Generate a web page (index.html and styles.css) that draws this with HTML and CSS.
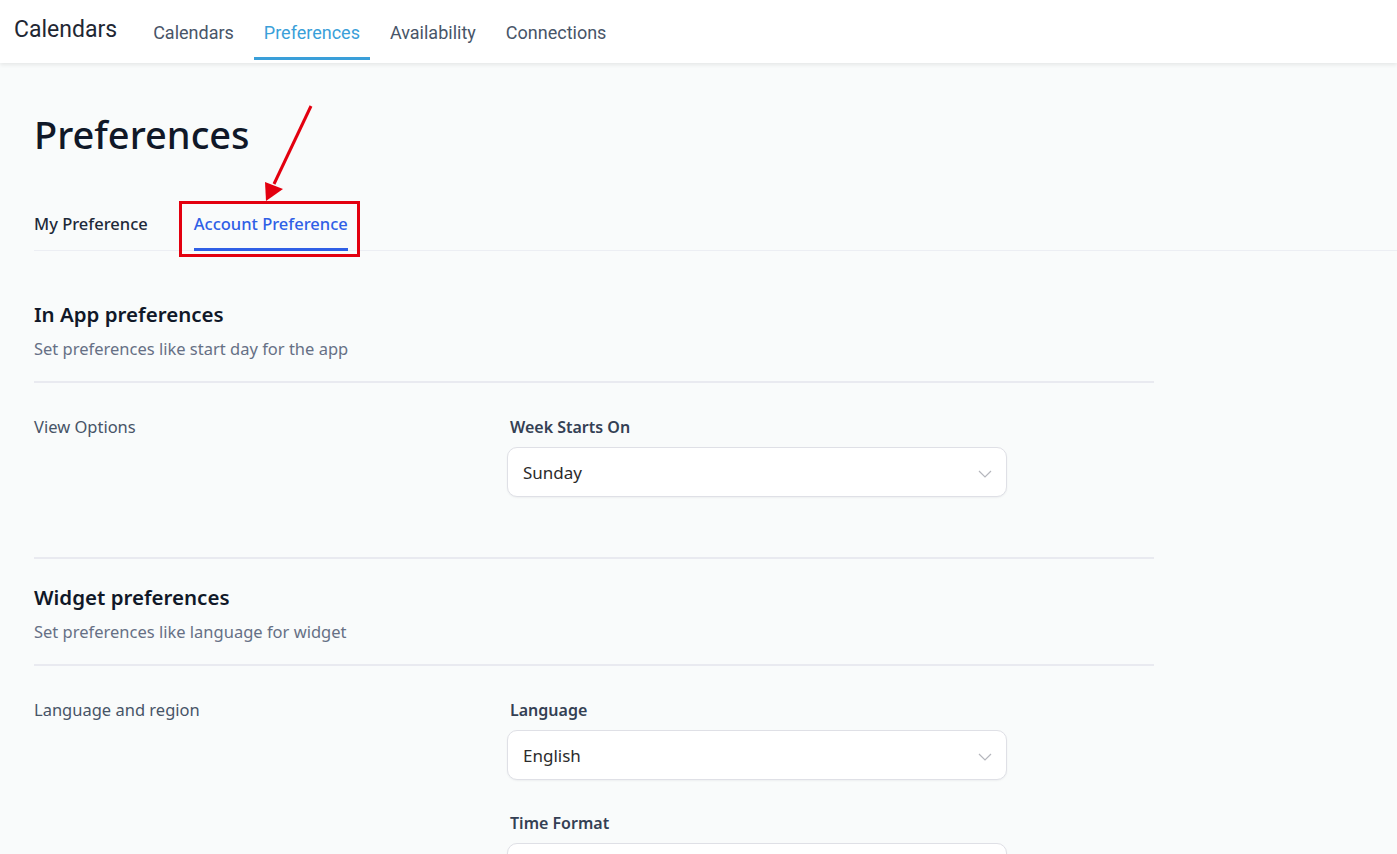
FILE: index.html
```html
<!DOCTYPE html>
<html lang="en">
<head>
  <meta charset="UTF-8" />
  <meta name="viewport" content="width=device-width, initial-scale=1.0" />
  <title>Calendars - Preferences</title>
  <link rel="stylesheet" href="styles.css">
</head>
<body>
  <header class="topbar">
    <div class="brand">Calendars</div>
    <nav class="topnav">
      <a class="topnav-item" href="#">Calendars</a>
      <a class="topnav-item active" href="#">Preferences</a>
      <a class="topnav-item" href="#">Availability</a>
      <a class="topnav-item" href="#">Connections</a>
    </nav>
  </header>

  <main class="page">
    <h1 class="page-title">Preferences</h1>

    <div class="tabs">
      <button class="tab" type="button">My Preference</button>
      <button class="tab active" type="button">Account Preference</button>
    </div>

    <!-- annotation: red box + arrow pointing at the tab -->
    <svg class="annotation" width="340" height="170" viewBox="0 0 340 170">
      <rect x="148.5" y="102.5" width="178" height="53" fill="none" stroke="#e3000f" stroke-width="3" />
      <line x1="279" y1="6" x2="242" y2="84" stroke="#e3000f" stroke-width="3" />
      <polygon points="234,101 233,82 251,89" fill="#e3000f" />
    </svg>

    <section class="pref-section first">
      <div class="section-head">
        <h2 class="section-title">In App preferences</h2>
        <p class="section-desc">Set preferences like start day for the app</p>
      </div>
      <div class="pref-row">
        <div class="row-label">View Options</div>
        <div class="row-fields">
          <div class="field">
            <label class="field-label">Week Starts On</label>
            <div class="select">
              <span>Sunday</span>
              <svg class="chevron" width="14" height="8" viewBox="0 0 14 8"><path d="M1 1l6 6 6-6" fill="none" stroke="#b5b7bd" stroke-width="1.2" /></svg>
            </div>
          </div>
        </div>
      </div>
    </section>

    <section class="pref-section">
      <div class="section-head">
        <h2 class="section-title">Widget preferences</h2>
        <p class="section-desc">Set preferences like language for widget</p>
      </div>
      <div class="pref-row">
        <div class="row-label">Language and region</div>
        <div class="row-fields">
          <div class="field">
            <label class="field-label">Language</label>
            <div class="select">
              <span>English</span>
              <svg class="chevron" width="14" height="8" viewBox="0 0 14 8"><path d="M1 1l6 6 6-6" fill="none" stroke="#b5b7bd" stroke-width="1.2" /></svg>
            </div>
          </div>
          <div class="field">
            <label class="field-label">Time Format</label>
            <div class="select">
              <span>12 hours</span>
              <svg class="chevron" width="14" height="8" viewBox="0 0 14 8"><path d="M1 1l6 6 6-6" fill="none" stroke="#b5b7bd" stroke-width="1.2" /></svg>
            </div>
          </div>
        </div>
      </div>
    </section>
  </main>
</body>
</html>
```

FILE: styles.css
```css
* {
  box-sizing: border-box;
}
body {
  margin: 0;
  background-color: #f9fbfb;
  color: #101828;
  font-family: 'Noto Sans', 'Open Sans', sans-serif;
}
.topbar {
  height: 63px;
  background-color: #fff;
  display: flex;
  align-items: flex-start;
  padding-left: 14px;
  box-shadow: 0 2px 4px rgba(0, 0, 0, 0.08);
  font-family: Roboto, sans-serif;
  position: relative;
  z-index: 1;
}
.brand {
  font-size: 23px;
  color: #1f2733;
  line-height: 60px;
  margin-right: 26px;
}
.topnav {
  display: flex;
  gap: 10px;
}
.topnav-item {
  display: block;
  height: 60px;
  padding: 21px 10px 0;
  line-height: 24px;
  font-size: 18px;
  color: #485568;
  text-decoration: none;
  border-bottom: 3px solid transparent;
}
.topnav-item.active {
  color: #3a9fd9;
  border-bottom-color: #3a9fd9;
}
.page {
  position: relative;
  padding: 0 0 40px 34px;
}
.page-title {
  margin: 0;
  padding-top: 45px;
  font-size: 38px;
  font-weight: 500;
  line-height: 52px;
  color: #101828;
}
.tabs {
  display: flex;
  gap: 46px;
  margin-top: 52px;
  border-bottom: 1px solid #eceef3;
}
.tab {
  background: none;
  border: none;
  padding: 0 0 12px;
  font-family: inherit;
  font-size: 16.5px;
  font-weight: 500;
  line-height: 24px;
  color: #1d2939;
  border-bottom: 3px solid transparent;
  margin-bottom: -1px;
}
.tab.active {
  color: #2f5fe6;
  border-bottom-color: #2f5fe6;
}
.annotation {
  position: absolute;
  left: 32px;
  top: 37px;
}
.pref-section {
  width: 1120px;
}
.pref-section.first {
  padding-top: 25px;
}
.section-head {
  padding-top: 24px;
  padding-bottom: 20px;
  border-bottom: 2px solid #e9eaf0;
}
.section-title {
  margin: 0;
  font-size: 20.5px;
  font-weight: 600;
  line-height: 28px;
  color: #101828;
}
.section-desc {
  margin: 9px 0 0;
  font-size: 16.5px;
  line-height: 24px;
  color: #667085;
}
.pref-row {
  display: grid;
  grid-template-columns: 473px 500px;
  padding: 32px 0 60px;
  border-bottom: 2px solid #e9eaf0;
}
.row-label {
  font-size: 16.5px;
  line-height: 24px;
  color: #475467;
}
.row-fields {
  display: flex;
  flex-direction: column;
  gap: 31px;
}
.field-label {
  display: block;
  padding-left: 3px;
  font-size: 16px;
  font-weight: 600;
  line-height: 24px;
  color: #344054;
}
.select {
  margin-top: 8px;
  height: 50px;
  display: flex;
  align-items: center;
  justify-content: space-between;
  padding: 0 14px 0 15px;
  background-color: #fff;
  border: 1px solid #dfe0e6;
  border-radius: 10px;
  box-shadow: 0 1px 2px rgba(16, 24, 40, 0.05);
  font-size: 17px;
  color: #2b2b2b;
}
.chevron {
  margin-top: 3px;
}
```
